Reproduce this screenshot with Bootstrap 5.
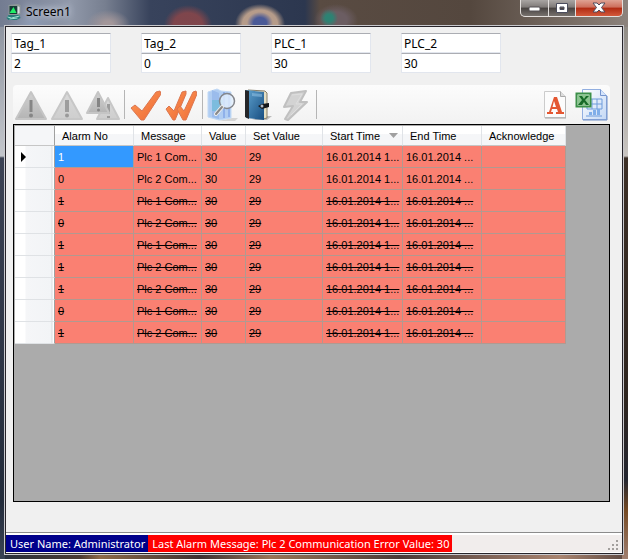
<!DOCTYPE html>
<html lang="en">
<head>
<meta charset="utf-8">
<meta name="viewport" content="width=device-width, initial-scale=1">
<title>Screen1</title>
<link rel="stylesheet" href="https://cdn.jsdelivr.net/npm/bootstrap@5.3.0/dist/css/bootstrap.min.css">
<style>
body{font-family:"Noto Sans","Open Sans",sans-serif;font-size:12px;line-height:16px;color:#000}
.window{
  padding:0 5px 5px;
  background:
    radial-gradient(ellipse 24px 20px at 188px 25px,#84464bee 60%,#84464b00),
    radial-gradient(ellipse 22px 14px at 108px 24px,#a3979a 20%,#a3979a00),
    radial-gradient(ellipse 24px 14px at 32px 24px,#8d9ab3 10%,#8d9ab300),
    radial-gradient(ellipse 13px 11px at 260px 23px,#4a5a97 50%,#4a5a9700),
    radial-gradient(ellipse 25px 20px at 260px 24px,#b69c8a 70%,#b69c8a00),
    radial-gradient(ellipse 9px 9px at 329px 18px,#2d8273 40%,#2d827300),
    radial-gradient(ellipse 22px 16px at 336px 20px,#6b5d62 50%,#6b5d6200),
    linear-gradient(90deg,#737c91 0,#9199aa 70px,#777f90 105px,#38435c 150px,#2c374f 305px,#594b42 320px,#54473e 470px,#82776f 600px,#8c837d) 0 0/100% 27px no-repeat,
    linear-gradient(#858c99 0,#c3c6cb 156px,#3c4354 158px,#2c3444 380px,#222b3a 500px,#394354) 0 0/5px 100% no-repeat,
    linear-gradient(#858079 0,#c9c5c1 156px,#3d3027 158px,#2e251f 400px,#242630 480px,#744923 510px,#a07f70) 100% 0/6px 100% no-repeat,
    linear-gradient(90deg,#27303e,#4a3a34 80px,#8d6a4a 100px,#3c3032 200px,#997557 270px,#4a3a38 400px,#a98470 560px,#5b4740);
}
.titlebar{height:26px}
.titlebar h1{font-size:12px;line-height:24px;text-shadow:0 0 6px #dfe5f0,0 0 8px #c9d3e4}
.caption-set{height:17px;border:1px solid #e3dfdd;border-top:0;border-radius:0 0 5px 5px;overflow:hidden;background:#e3dfdd;gap:1px}
.caption-set button{border:0;padding:0;width:27px;background:linear-gradient(#a9a5a3,#7f7a78 45%,#474240 50%,#77716d);display:flex;justify-content:center;align-items:center}
.caption-set .narrower{width:26px}
.caption-set .closer{width:46px;background:linear-gradient(#dfa293,#cd6e5b 45%,#b02a12 50%,#d3593b)}
.client{background:#f0f0f0;border:1px solid #27242a;outline:1px solid #c9c9cd}
.tags{padding:6px 5px 12px;gap:30px}
.tag-pair{width:100px}
.tag-pair input{width:100%;height:20px;border:1px solid #e2e6ee;border-top-color:#abadb3;border-radius:1px;padding:0 2px;background:#fff;color:#000;font-size:12px;outline-offset:-1px}
.workspace{padding:0 12px 30px 7px}
.tools{height:39px;background:linear-gradient(#fcfcfc,#f2f2f2);border-radius:4px 4px 0 0;padding:0 1px 0 0}
.tools button{border:0;background:none;padding:0;width:36px;height:36px;display:flex;align-items:center;justify-content:center}
.tools .rule{width:1px;height:29px;background:#b5b5b5;margin:0 2px 0 3px}
.grid-area{background:#ababab;border:1px solid #000;padding:1px;min-height:360px}
.alarms{table-layout:fixed;width:551px;border-collapse:separate;border-spacing:0;font-family:"Liberation Sans",Arial,sans-serif;font-size:11px;line-height:16px}
.c-head{width:40px}.c-no{width:79px}.c-msg{width:68px}.c-val{width:44px}.c-set{width:77px}.c-start{width:80px}.c-end{width:79px}.c-ack{width:84px}
.alarms th,.alarms td{white-space:nowrap;overflow:hidden;padding:0 3px;height:22px}
.alarms thead th,.alarms thead td{height:20px;font-weight:400;padding:0 7px;background:linear-gradient(#fff 40%,#f5f6f8 45%,#f5f6f8);border-right:1px solid #e0e3e7;border-bottom:1px solid #c6c6c6}
.alarms thead td:first-child{background:#f5f6f8;border-right:1px solid #a0a0a0}
.alarms tbody td{background:#fa8072;border-right:1px solid #b19990;border-bottom:1px solid #b19990}
.alarms tbody th{background:linear-gradient(90deg,#fff 10px,#f5f6f8 11px,#f2f4f6 36px,#dadde0 37px,#fff 38px);border-right:1px solid #a0a0a0;border-bottom:1px solid #dfe2e5;padding:0 0 0 6px}
.alarms th svg,.alarms thead svg{display:block}
.alarms tbody td.picked{background:#39f;color:#fff}
.struck td{text-decoration:line-through}
.status{border-top:1px solid #8c8c8c;background:#f1edec;padding:2px 2px 1px 0;box-shadow:inset 0 2px #fff,inset 0 -1px #fff}
.status span{color:#fff;font-size:11px;line-height:17px;height:17px;padding:0 3px 0 4px;white-space:nowrap}
.user-label{background:#00008b}
.alarm-label{background:#f00}
</style>
</head>
<body>
<div class="window d-flex flex-column min-vh-100">
  <header class="titlebar d-flex align-items-start justify-content-between">
    <div class="d-flex align-items-center gap-1">
      <svg width="17" height="18" viewBox="0 0 16 18"><path d="M3 2l9-1 3 1v9l-3 1H3z" fill="#8d9898"/><path d="M4 3h8v8H4z" fill="#173b37"/><path d="M8 4l3 6H4z" fill="#20ee68"/><path d="M12 3l2 1v6l-2 1z" fill="#d8dfdf"/><path d="M3 12h11l1 3-4 2H3l-2-2z" fill="#287b78"/><path d="M2 14l4 1 8-2M4 16l8-1" stroke="#9ee0d0" fill="none"/></svg>
      <h1 class="mb-0 fw-normal">Screen1</h1>
    </div>
    <div class="caption-set d-flex">
      <button type="button" aria-label="Minimize"><svg width="13" height="8"><rect x="1" y="3" width="11" height="4" rx="1" fill="#fff" stroke="#545154"/></svg></button>
      <button type="button" class="narrower" aria-label="Maximize"><svg width="12" height="11"><path fill-rule="evenodd" d="M.5.5h11v9H.5zM4 4v2.500h4V4z" fill="#fff" stroke="#4b4d5d"/></svg></button>
      <button type="button" class="closer" aria-label="Close"><svg width="14" height="12"><path d="M1 1h4l2 2 2-2h4L9.500 5.500 13 10H9L7 8l-2 2H1l3.500-4.500z" fill="#fff" stroke="#514c5d"/></svg></button>
    </div>
  </header>
  <main class="client d-flex flex-column flex-grow-1">
    <div class="tags d-flex flex-wrap">
      <div class="tag-pair d-flex flex-column"><input type="text" value="Tag_1" aria-label="Tag 1 name"><input type="text" value="2" aria-label="Tag 1 value"></div>
      <div class="tag-pair d-flex flex-column"><input type="text" value="Tag_2" aria-label="Tag 2 name"><input type="text" value="0" aria-label="Tag 2 value"></div>
      <div class="tag-pair d-flex flex-column"><input type="text" value="PLC_1" aria-label="PLC 1 name"><input type="text" value="30" aria-label="PLC 1 value"></div>
      <div class="tag-pair d-flex flex-column"><input type="text" value="PLC_2" aria-label="PLC 2 name"><input type="text" value="30" aria-label="PLC 2 value"></div>
    </div>
    <div class="workspace d-flex flex-column flex-grow-1">
      <div class="tools d-flex align-items-center" role="toolbar" aria-label="Alarm tools">
        <svg width="0" height="0" aria-hidden="true"><defs>
          <linearGradient id="gy" x2="0" y2="1"><stop stop-color="#d2d2d2"/><stop offset="1" stop-color="#b4b4b4"/></linearGradient>
          <linearGradient id="gl" x2="0" y2="1"><stop stop-color="#dadada"/><stop offset="1" stop-color="#cecece"/></linearGradient>
          <linearGradient id="og" x2="1" y2="1"><stop stop-color="#ff9c58"/><stop offset="1" stop-color="#ec6532"/></linearGradient>
          <linearGradient id="bk" x2="1" y2="1"><stop stop-color="#5fa2cf"/><stop offset="1" stop-color="#174d80"/></linearGradient>
          <linearGradient id="gr" x2="1" y2="1"><stop stop-color="#fff"/><stop offset="1" stop-color="#c4d8f5"/></linearGradient>
        </defs></svg>
        <button type="button" aria-label="Active alarms"><svg width="34" height="32" viewBox="0 0 34 32"><path d="M17 3L32 30H2z" fill="url(#gy)" stroke="#c5c5c5" stroke-width="2" stroke-linejoin="round"/><path d="M15.500 11h3v12h-3z" fill="#868686"/><circle cx="17" cy="26.500" r="2" fill="#868686"/></svg></button>
        <button type="button" aria-label="Alarm history"><svg width="34" height="32" viewBox="0 0 34 32"><path d="M17 3L32 30H2z" fill="url(#gl)" stroke="#c7c7c7" stroke-width="2" stroke-linejoin="round"/><path d="M15 11h4v12h-4z" fill="#9d9d9d"/><circle cx="17" cy="26.500" r="2" fill="#999"/></svg></button>
        <button type="button" aria-label="All alarms"><svg width="34" height="32" viewBox="0 0 34 32"><path d="M22 9l11 21H11z" fill="url(#gl)" stroke="#c7c7c7" stroke-width="2" stroke-linejoin="round"/><path d="M21 15h3v10h-3zM21 27h3v2h-3z" fill="#9b9b9b"/><path d="M12 3l11 21H1z" fill="url(#gy)" stroke="#c5c5c5" stroke-width="2" stroke-linejoin="round"/><path d="M11 9h3v9h-3z" fill="#858585"/><circle cx="12.500" cy="21" r="1.500" fill="#858585"/></svg></button>
        <span class="rule"></span>
        <button type="button" aria-label="Acknowledge"><svg width="32" height="32" viewBox="0 0 32 32"><path d="M2 19l4-3 7 6L27 3l4-1 1 3-17 26h-3z" fill="url(#og)" stroke="#db7650" stroke-linejoin="round"/></svg></button>
        <button type="button" aria-label="Acknowledge all"><svg width="32" height="32" viewBox="0 0 32 32"><path d="M1 20l3-3 5 5 8-19 4-1v3L10 31H8z" fill="url(#og)" stroke="#db7650" stroke-linejoin="round"/><path d="M12 20l3-3 4 5 9-19 3-1 1 3-11 26h-3z" fill="url(#og)" stroke="#db7650" stroke-linejoin="round"/></svg></button>
        <span class="rule"></span>
        <button type="button" aria-label="Find"><svg width="32" height="34" viewBox="0 0 32 34"><path d="M25 30h6l-3 3H12z" fill="#d4d4d4"/><path d="M1 4l9-3 4 2 10 1v26l-12 2L1 29z" fill="#b0cdf2" stroke="#c1d9f5"/><path d="M5 2l7 3v26l-7-2z" fill="#9bbcec"/><path d="M5 12h12l-4 11H5z" fill="#6fbcd8" opacity=".7"/><path d="M17 4v26M22 5v24" stroke="#8fb1ea" stroke-width="2"/><circle cx="20" cy="13" r="7.500" fill="#e2effc" fill-opacity=".8" stroke="#84868c" stroke-width="1.500"/><path d="M15 19L9 26" stroke="#eee" stroke-width="4" stroke-linecap="round"/><path d="M15 19L9 26" stroke="#888" stroke-width="2" stroke-linecap="round"/></svg></button>
        <button type="button" aria-label="Log book"><svg width="30" height="34" viewBox="0 0 30 34"><path d="M22 28h6l-5 4H8z" fill="#bbb"/><path d="M4 2l17 1 2 2v25l-4 1z" fill="#e5dfc4" stroke="#877e68"/><path d="M2 2l18 2v28L2 30z" fill="url(#bk)"/><path d="M1 2l4 1v28l-4-2z" fill="#252629"/><path d="M8 5l10 1v3L8 8z" fill="#8bbddf" opacity=".6"/><path d="M14 18l4-2 7-1v4l-7 2z" fill="#161719"/><circle cx="18" cy="18" r="1.500" fill="#b4c0cc"/></svg></button>
        <button type="button" aria-label="Trigger"><svg width="32" height="32" viewBox="0 0 32 32"><path d="M12 4l15-2-6 11h7L9 31l-3-1 8-13-9 1z" fill="#d3d3d3" stroke="#c0c0c0" stroke-width="2" stroke-linejoin="round"/><path d="M13 6l10-1-6 10h6L12 26" fill="none" stroke="#dedede"/></svg></button>
        <span class="rule"></span>
        <button type="button" class="ms-auto" aria-label="Export PDF"><svg width="22" height="28" viewBox="0 0 22 28"><path d="M.5.5h16l5 5v21H.5z" fill="#fcfcfc" stroke="#ccc"/><path d="M1 27h21V6" fill="none" stroke="#a5a5a5"/><path d="M16.500.5v5h5" fill="#ddd" stroke="#aaa"/><path fill-rule="evenodd" d="M10 6h3l5 15h2v2h-8v-2h2l-1-3H8l-1 3h2v2H3v-2h2zM8.500 16H12l-2-6z" fill="#e45732"/></svg></button>
        <button type="button" aria-label="Export Excel"><svg width="34" height="32" viewBox="0 0 34 32"><path d="M8.500.5h18l6 6v24h-24z" fill="url(#gr)" stroke="#91aee0"/><path d="M9 31h24V7" fill="none" stroke="#6f8ec6"/><path d="M26.500.5v6h6" fill="#d6e5fb" stroke="#7695cf"/><path d="M13 10h15v10H13zM13 15h15M18 10v10M23 10v10M12 27h16" stroke="#6f9cdb" fill="none"/><path d="M15 26v-3h3v3zM19 26v-5h3v5zM23 26v-6h3v6z" fill="#80aee9"/><path d="M2.500 4.500h14v13h-14z" fill="#dceede" stroke="#3c9049" stroke-width="2"/><path d="M4 6h11v10H4z" fill="#8bc78f"/><path d="M5 7h3l2 3 2-3h3l-4 4 4 5h-3l-2-3-2 3H4l4-5z" fill="#176a28"/></svg></button>
      </div>
      <div class="grid-area flex-grow-1">
        <table class="alarms">
          <colgroup><col class="c-head"><col class="c-no"><col class="c-msg"><col class="c-val"><col class="c-set"><col class="c-start"><col class="c-end"><col class="c-ack"></colgroup>
          <thead><tr><td></td><th scope="col">Alarm No</th><th scope="col">Message</th><th scope="col">Value</th><th scope="col">Set Value</th><th scope="col" class="pe-1" aria-sort="descending"><div class="d-flex justify-content-between align-items-center">Start Time<svg width="9" height="5"><path d="M0 0h9L4.500 5z" fill="#a0a0a0"/></svg></div></th><th scope="col">End Time</th><th scope="col">Acknowledge</th></tr></thead>
          <tbody>
            <tr><th scope="row" aria-label="Current row"><svg width="5" height="10"><path d="M0 0l5 5-5 5z"/></svg></th><td class="picked">1</td><td>Plc 1 Com...</td><td>30</td><td>29</td><td>16.01.2014 1...</td><td>16.01.2014 ...</td><td></td></tr>
            <tr><th></th><td>0</td><td>Plc 2 Com...</td><td>30</td><td>29</td><td>16.01.2014 1...</td><td>16.01.2014 ...</td><td></td></tr>
            <tr class="struck"><th></th><td>1</td><td>Plc 1 Com...</td><td>30</td><td>29</td><td>16.01.2014 1...</td><td>16.01.2014 ...</td><td></td></tr>
            <tr class="struck"><th></th><td>0</td><td>Plc 2 Com...</td><td>30</td><td>29</td><td>16.01.2014 1...</td><td>16.01.2014 ...</td><td></td></tr>
            <tr class="struck"><th></th><td>1</td><td>Plc 1 Com...</td><td>30</td><td>29</td><td>16.01.2014 1...</td><td>16.01.2014 ...</td><td></td></tr>
            <tr class="struck"><th></th><td>1</td><td>Plc 2 Com...</td><td>30</td><td>29</td><td>16.01.2014 1...</td><td>16.01.2014 ...</td><td></td></tr>
            <tr class="struck"><th></th><td>1</td><td>Plc 2 Com...</td><td>30</td><td>29</td><td>16.01.2014 1...</td><td>16.01.2014 ...</td><td></td></tr>
            <tr class="struck"><th></th><td>0</td><td>Plc 1 Com...</td><td>30</td><td>29</td><td>16.01.2014 1...</td><td>16.01.2014 ...</td><td></td></tr>
            <tr class="struck"><th></th><td>1</td><td>Plc 2 Com...</td><td>30</td><td>29</td><td>16.01.2014 1...</td><td>16.01.2014 ...</td><td></td></tr>
          </tbody>
        </table>
      </div>
    </div>
    <footer class="status d-flex">
      <span class="user-label">User Name: Administrator</span><span class="alarm-label">Last Alarm Message: Plc 2 Communication Error Value: 30</span>
      <svg class="ms-auto align-self-end" width="12" height="12"><path d="M8 0h2v2H8zM4 4h2v2H4zM8 4h2v2H8zM0 8h2v2H0zM4 8h2v2H4zM8 8h2v2H8z" fill="#a39f9d"/></svg>
    </footer>
  </main>
</div>
<script src="https://cdn.jsdelivr.net/npm/bootstrap@5.3.0/dist/js/bootstrap.bundle.min.js"></script>
</body>
</html>
